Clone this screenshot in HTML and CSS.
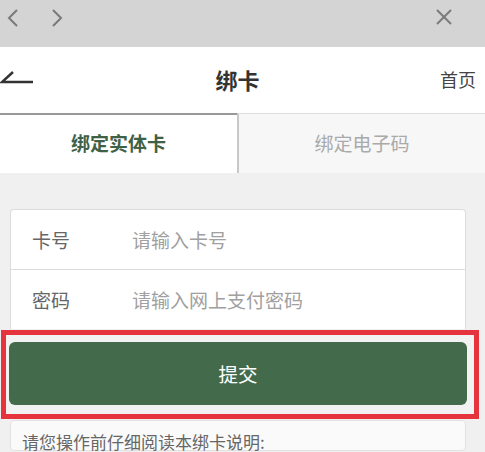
FILE: index.html
```html
<!DOCTYPE html>
<html lang="zh-CN">
<head>
<meta charset="utf-8">
<title>绑卡</title>
<link rel="stylesheet" href="styles.css">
</head>
<body>
<div class="topbar">
  <svg class="nav-icon back-nav" width="12" height="18" viewBox="0 0 12 18"><polyline points="10,1 2,9 10,17" /></svg>
  <svg class="nav-icon fwd-nav" width="12" height="18" viewBox="0 0 12 18"><polyline points="2,1 10,9 2,17" /></svg>
  <span class="spacer"></span>
  <svg class="nav-icon close-nav" width="18" height="18" viewBox="0 0 18 18"><line x1="2" y1="2" x2="16" y2="16"/><line x1="16" y1="2" x2="2" y2="16"/></svg>
</div>
<div class="header">
  <svg class="back-arrow" width="36" height="20" viewBox="0 0 36 20"><polyline points="14,3 3,13 34,13" /></svg>
  <div class="title">绑卡</div>
  <div class="home">首页</div>
</div>
<div class="tabs">
  <div class="tab active">绑定实体卡</div>
  <div class="tab">绑定电子码</div>
</div>
<div class="content">
  <div class="card">
    <div class="row"><span class="label">卡号</span><span class="placeholder">请输入卡号</span></div>
    <div class="row"><span class="label">密码</span><span class="placeholder">请输入网上支付密码</span></div>
  </div>
  <div class="highlight">
    <div class="submit">提交</div>
  </div>
  <div class="notice">请您操作前仔细阅读本绑卡说明:</div>
</div>
</body>
</html>
```

FILE: styles.css
```css
* { box-sizing: border-box; }
html, body { margin: 0; padding: 0; }
body {
  font-family: "Noto Sans CJK SC", "Noto Sans", sans-serif;
  background: #f0f0f0;
  width: 485px;
  height: 452px;
  overflow: hidden;
}
.topbar {
  height: 47px;
  background: #d4d4d4;
  display: flex;
  align-items: flex-start;
  padding: 9px 0 0 7px;
}
.nav-icon { fill: none; stroke: #7a7a7a; stroke-width: 2; }
.back-nav { margin-right: 32px; }
.spacer { flex: 1; }
.close-nav { margin-right: 32px; margin-top: -1px; }
.header {
  height: 66px;
  background: #fff;
  display: flex;
  align-items: center;
  padding-right: 9px;
  padding-bottom: 3px;
}
.back-arrow { fill: none; stroke: #333; stroke-width: 2.5; margin-left: -1px; }
.title {
  flex: 1;
  text-align: center;
  font-size: 22px;
  font-weight: 700;
  color: #333;
}
.home { font-size: 18px; color: #444; }
.tabs {
  display: flex;
  height: 60px;
  background: #fff;
}
.tab {
  flex: 1;
  display: flex;
  align-items: center;
  justify-content: center;
  font-size: 19px;
  color: #aaa;
  background: #f7f7f7;
  border-top: 1px solid #ddd;
  border-left: 2px solid #c8c8c8;
  padding-bottom: 3px;
}
.tab.active {
  flex: 0 0 237px;
  background: #fff;
  color: #3f6146;
  font-weight: 700;
  border-top: 2px solid #999;
  border-left: none;
}
.content { padding-top: 36px; }
.card {
  margin: 0 19px 0 10px;
  background: #fff;
  border: 1px solid #dcdcdc;
  border-bottom: none;
  border-radius: 4px 4px 0 0;
}
.row {
  height: 59px;
  display: flex;
  align-items: center;
  font-size: 19px;
  padding-left: 21px;
}
.row + .row { border-top: 1px solid #dcdcdc; height: 60px; }
.label { color: #666; width: 100px; }
.placeholder { color: #a0a0a0; }
.highlight {
  margin: 1px 6px 0 1px;
  border: 5px solid #e6343f;
  padding: 7px 7px 9px 3px;
  background: #f2f2f2;
}
.submit {
  height: 63px;
  background: #436b4b;
  border-radius: 6px;
  color: #fff;
  font-size: 19.5px;
  display: flex;
  align-items: center;
  justify-content: center;
}
.notice {
  margin: 1px 19px 0 10px;
  background: #fafafa;
  border: 1px solid #e2e2e2;
  border-radius: 4px;
  padding: 10px 11px 0;
  font-size: 17px;
  line-height: 22px;
  color: #666;
  height: 31px;
}
```
